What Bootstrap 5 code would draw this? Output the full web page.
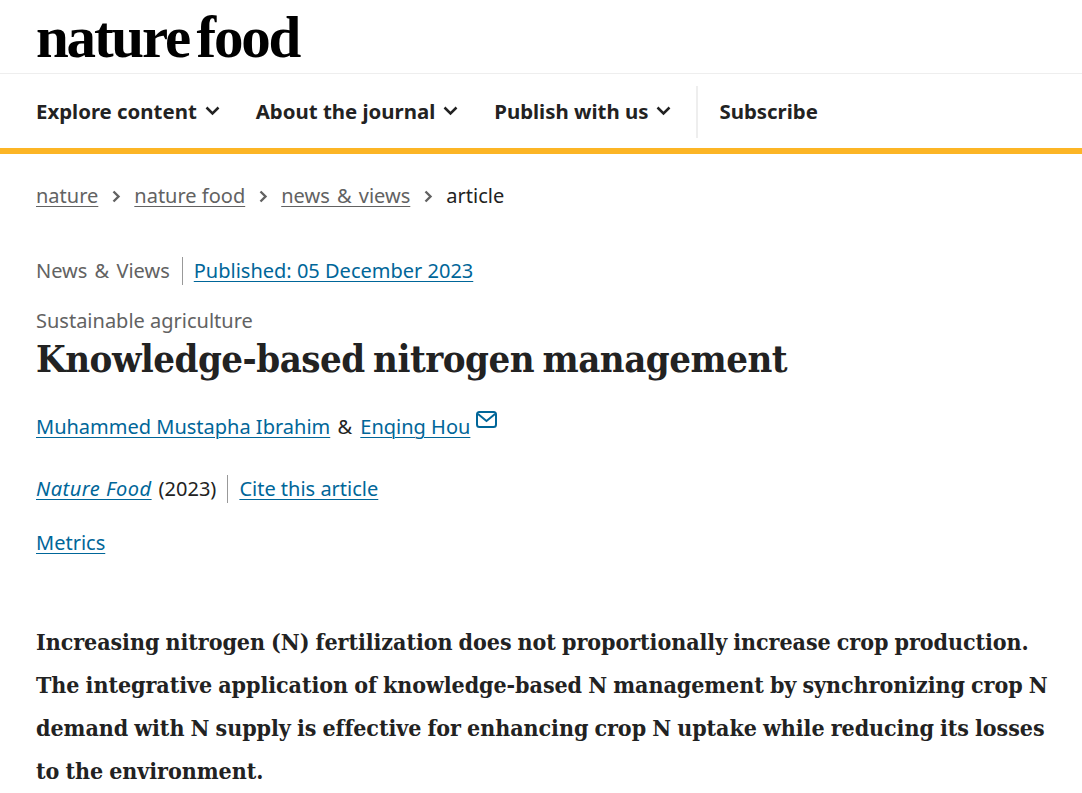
<!DOCTYPE html>
<html lang="en">
<head>
  <meta charset="UTF-8">
  <title>Knowledge-based nitrogen management</title>
  <link href="https://cdn.jsdelivr.net/npm/bootstrap@5.3.3/dist/css/bootstrap.min.css" rel="stylesheet">
  <style>
    body { font-family: "Noto Sans", "Liberation Sans", sans-serif; color: #222; font-size: 20px; background: #fff; overflow: hidden; }
    a { color: #069; text-underline-offset: 3px; text-decoration-thickness: 1px; }
    .site-top { height: 74px; padding: 6px 36px 0; border-bottom: 1px solid #eee; }
    .site-logo { font-family: "Liberation Serif", serif; font-weight: 700; font-size: 59px; line-height: 62px; letter-spacing: -2.2px; color: #000; word-spacing: -5px; }
    .site-menu { height: 80px; padding: 1px 36px 0; border-bottom: 6px solid #fcb525; }
    .site-menu a { color: #222; font-weight: 700; font-size: 20.4px; text-decoration: none; }
    .menu-item { margin-right: 36px; gap: 8px; }
    .menu-item.menu-last { margin-right: 25px; }
    .menu-sub { border-left: 2px solid #eee; height: 52px; padding-left: 21px; }
    .crumbs { padding: 30px 36px 0; line-height: 24px; gap: 13.5px; color: #222; }
    .crumbs a { color: #626262; }
    .amp-text { word-spacing: 2px; }
    .head-area { padding: 0 36px; }
    .meta-line { margin-top: 49px; height: 28px; line-height: 28px; color: #626262; }
    .meta-line .sep { border-left: 1px solid #999; height: 28px; margin: 0 11px 0 12px; }
    .subject { color: #626262; margin-top: 23px; line-height: 26px; }
    .art-title { font-family: "DejaVu Serif Condensed", "DejaVu Serif", serif; font-stretch: condensed; font-weight: 700; font-size: 38px; line-height: 49px; margin: 0; color: #222; letter-spacing: -0.5px; word-spacing: -3px; }
    .author-line { margin-top: 28px; line-height: 28px; }
    .author-line svg { vertical-align: 6px; margin-left: 6px; }
    .author-sep { margin: 0 3px 0 2px; }
    .cite-line { margin-top: 34px; height: 28px; line-height: 28px; }
    .cite-line .sep { border-left: 1px solid #999; height: 28px; margin: 0 11px; }
    .cite-line i { letter-spacing: 0.5px; }
    .cite-year { margin-left: 7px; }
    .metrics-line { margin-top: 26px; line-height: 28px; }
    .abstract { margin: 63px 30px 0 36px; font-family: "DejaVu Serif Condensed", "DejaVu Serif", serif; font-stretch: condensed; font-weight: 700; font-size: 23px; line-height: 43px; color: #222; letter-spacing: -0.05px; word-spacing: -1px; }
  </style>
</head>
<body>
  <!-- Journal logo -->
  <div class="site-top">
    <div class="site-logo">nature food</div>
  </div>

  <!-- Main menu -->
  <nav class="site-menu d-flex align-items-center">
    <a href="#" class="menu-item d-flex align-items-center">Explore content
      <svg width="15" height="10" viewBox="0 0 15 10"><path d="M1.500 1.500 7.500 7.500 13.500 1.500" fill="none" stroke="#222" stroke-width="2.500"/></svg></a>
    <a href="#" class="menu-item d-flex align-items-center">About the journal
      <svg width="15" height="10" viewBox="0 0 15 10"><path d="M1.500 1.500 7.500 7.500 13.500 1.500" fill="none" stroke="#222" stroke-width="2.500"/></svg></a>
    <a href="#" class="menu-item menu-last d-flex align-items-center">Publish with us
      <svg width="15" height="10" viewBox="0 0 15 10"><path d="M1.500 1.500 7.500 7.500 13.500 1.500" fill="none" stroke="#222" stroke-width="2.500"/></svg></a>
    <a href="#" class="menu-sub d-flex align-items-center">Subscribe</a>
  </nav>

  <!-- Breadcrumbs -->
  <div class="crumbs d-flex align-items-center">
    <a href="#">nature</a>
    <svg width="9" height="13" viewBox="0 0 9 13"><path d="M1.500 1.500 6.500 6.500 1.500 11.500" fill="none" stroke="#626262" stroke-width="2.400"/></svg>
    <a href="#">nature food</a>
    <svg width="9" height="13" viewBox="0 0 9 13"><path d="M1.500 1.500 6.500 6.500 1.500 11.500" fill="none" stroke="#626262" stroke-width="2.400"/></svg>
    <a href="#" class="amp-text">news &amp; views</a>
    <svg width="9" height="13" viewBox="0 0 9 13"><path d="M1.500 1.500 6.500 6.500 1.500 11.500" fill="none" stroke="#626262" stroke-width="2.400"/></svg>
    <span>article</span>
  </div>

  <!-- Article header -->
  <div class="head-area">
    <div class="meta-line d-flex align-items-center">
      <span class="amp-text">News &amp; Views</span><span class="sep"></span><a href="#">Published: 05 December 2023</a>
    </div>
    <div class="subject">Sustainable agriculture</div>
    <h1 class="art-title">Knowledge-based nitrogen management</h1>
    <div class="author-line">
      <a href="#">Muhammed Mustapha Ibrahim</a> <span class="author-sep">&amp;</span> <a href="#">Enqing Hou</a><svg width="21" height="17" viewBox="0 0 21 17"><rect x="1" y="1" width="19" height="15" rx="2.500" fill="none" stroke="#069" stroke-width="2"/><path d="M2 3 10.500 10 19 3" fill="none" stroke="#069" stroke-width="2"/></svg>
    </div>
    <div class="cite-line d-flex align-items-center">
      <a href="#"><i>Nature Food</i></a><span class="cite-year">(2023)</span><span class="sep"></span><a href="#">Cite this article</a>
    </div>
    <div class="metrics-line"><a href="#">Metrics</a></div>
  </div>

  <!-- Standfirst -->
  <p class="abstract">Increasing nitrogen (N) fertilization does not proportionally increase crop production. The integrative application of knowledge-based N management by synchronizing crop N demand with N supply is effective for enhancing crop N uptake while reducing its losses to the environment.</p>
</body>
</html>
